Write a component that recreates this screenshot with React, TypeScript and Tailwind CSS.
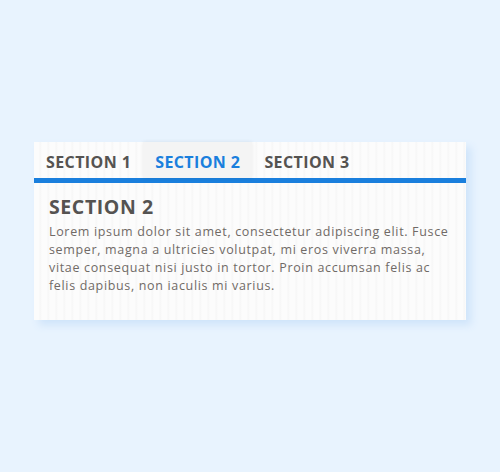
import { useState } from "react";

const lorem =
  "Lorem ipsum dolor sit amet, consectetur adipiscing elit. Fusce semper, magna a ultricies volutpat, mi eros viverra massa, vitae consequat nisi justo in tortor. Proin accumsan felis ac felis dapibus, non iaculis mi varius.";

const tabs = [
  { title: "SECTION 1", body: lorem },
  { title: "SECTION 2", body: lorem },
  { title: "SECTION 3", body: lorem },
];

const App = () => {
  const [active, setActive] = useState(1);

  return (
    <div className="min-h-[472px] w-full bg-[#e8f3fe] flex justify-center pt-[142px] font-['Open_Sans',sans-serif]">
      <div className="w-[432px] h-[178px] self-start bg-[#fbfbfb] bg-[repeating-linear-gradient(90deg,#fcfcfc_0px,#fcfcfc_5px,#f6f6f6_6px,#fcfcfc_8px)] shadow-[5px_5px_8px_#cfe4fa]">
        <div className="flex h-[36px]">
          {tabs.map((tab, index) => (
            <button
              key={index}
              onClick={() => setActive(index)}
              className={
                index === active
                  ? "h-full px-[12px] pt-[3px] text-[16px] font-bold tracking-[0.4px] text-[#1a7fdd] bg-[#f4f4f4] shadow-[0_0_4px_rgba(0,0,0,0.07)]"
                  : "h-full px-[12px] pt-[3px] text-[16px] font-bold tracking-[0.4px] text-[#555351]"
              }
            >
              {tab.title}
            </button>
          ))}
        </div>
        <div className="h-[5px] bg-[#1a7fdd]"></div>
        <div className="px-[15px] pt-[12px]">
          <h2 className="text-[19.5px] leading-[24px] font-bold tracking-[0.6px] text-[#555351]">
            {tabs[active].title}
          </h2>
          <p className="mt-[4px] text-[12.5px] leading-[18px] tracking-[0.66px] text-[#706a66]">
            {tabs[active].body}
          </p>
        </div>
      </div>
    </div>
  );
};

export default App;
